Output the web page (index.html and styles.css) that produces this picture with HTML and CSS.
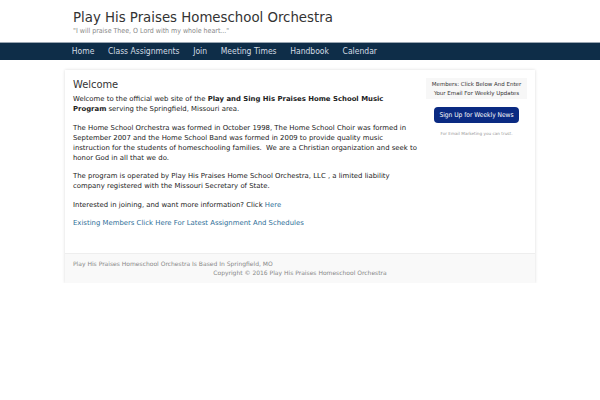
FILE: index.html
```html
<!DOCTYPE html>
<html>
<head>
    <title>Play His Praises Homeschool Orchestra</title>
    <link rel="stylesheet" href="styles.css">
</head>
<body>
    <div class="site-header">
        <div class="site-title">Play His Praises Homeschool Orchestra</div>
        <div class="site-tagline">"I will praise Thee, O Lord with my whole heart..."</div>
    </div>

    <div class="nav-bar">
        <ul class="nav-menu">
            <li><a href="#">Home</a></li>
            <li><a href="#">Class Assignments</a></li>
            <li><a href="#">Join</a></li>
            <li><a href="#">Meeting Times</a></li>
            <li><a href="#">Handbook</a></li>
            <li><a href="#">Calendar</a></li>
        </ul>
    </div>

    <div class="page-card">
        <div class="content-row">
            <div class="main-content">
                <h2>Welcome</h2>
                <p>Welcome to the official web site of the <b>Play and Sing His Praises Home School Music Program</b> serving the Springfield, Missouri area.</p>
                <p>The Home School Orchestra was formed in October 1998, The Home School Choir was formed in September 2007 and the Home School Band was formed in 2009 to provide quality music instruction for the students of homeschooling families.&nbsp; We are a Christian organization and seek to honor God in all that we do.</p>
                <p>The program is operated by Play His Praises Home School Orchestra, LLC , a limited liability company registered with the Missouri Secretary of State.</p>
                <p>Interested in joining, and want more information? Click <a href="#">Here</a></p>
                <p><a href="#">Existing Members Click Here For Latest Assignment And Schedules</a></p>
            </div>
            <div class="sidebar">
                <div class="signup-note">Members: Click Below And Enter Your Email For Weekly Updates</div>
                <a href="#" class="signup-btn">Sign Up for Weekly News</a>
                <div class="signup-small">For Email Marketing you can trust.</div>
            </div>
        </div>
        <div class="site-footer">
            <div class="footer-left">Play His Praises Homeschool Orchestra Is Based In Springfield, MO</div>
            <div class="footer-copy">Copyright &copy; 2016 Play His Praises Homeschool Orchestra</div>
        </div>
    </div>
</body>
</html>
```

FILE: styles.css
```css
body {
    margin: 0;
    background: #fff;
    font-family: "DejaVu Sans", sans-serif;
    color: #222;
}
.site-header {
    padding: 7px 73px 0;
    height: 35px;
}
.site-title {
    font-family: "DejaVu Sans Condensed", "DejaVu Sans", sans-serif;
    font-size: 14.8px;
    color: #333;
    line-height: 20px;
}
.site-tagline {
    font-family: "DejaVu Sans Condensed", "DejaVu Sans", sans-serif;
    font-size: 7px;
    color: #888;
    margin-top: 0;
}
.nav-bar {
    background: #0e2d48;
    border-top: 1px solid #9aa6b2;
    height: 17px;
}
.nav-menu {
    list-style: none;
    margin: 0;
    padding: 0 0 0 65px;
    display: flex;
}
.nav-menu a {
    display: block;
    padding: 0 6.8px;
    line-height: 17px;
    font-family: "DejaVu Sans Condensed", "DejaVu Sans", sans-serif;
    font-size: 8.5px;
    color: #d3dce4;
    text-decoration: none;
}
.page-card {
    margin: 10px 65px 0;
    background: #fff;
    box-shadow: 0 0 3px rgba(0,0,0,0.15);
}
.content-row {
    display: flex;
    padding: 8px 8px 25px;
}
.main-content {
    flex: 1;
    font-size: 6.9px;
    line-height: 10px;
    color: #222;
}
.main-content h2 {
    font-family: "DejaVu Sans Condensed", "DejaVu Sans", sans-serif;
    font-size: 11px;
    font-weight: normal;
    margin: 0 0 2px;
    line-height: 14px;
    color: #333;
}
.main-content p {
    margin: 0 0 8.5px;
}
.main-content p:last-child {
    margin-bottom: 0;
}
.main-content a {
    color: #2f6f98;
    text-decoration: none;
}
.sidebar {
    width: 101px;
    margin-left: 8px;
    text-align: center;
}
.signup-note {
    background: #f7f7f7;
    font-size: 5.5px;
    line-height: 8.5px;
    padding: 2px 3px;
    color: #333;
}
.signup-btn {
    display: inline-block;
    margin-top: 8px;
    background: #0a2a82;
    color: #fff;
    font-family: "DejaVu Sans Condensed", "DejaVu Sans", sans-serif;
    font-size: 6.6px;
    line-height: 16px;
    padding: 0 5px;
    border-radius: 4px;
    text-decoration: none;
}
.signup-small {
    font-size: 4.2px;
    color: #999;
    margin-top: 8px;
}
.site-footer {
    background: #f9f9f9;
    border-top: 1px solid #eee;
    padding: 5px 8px 6px;
    font-size: 6px;
    line-height: 9px;
    color: #888;
}
.footer-copy {
    text-align: center;
}
```
